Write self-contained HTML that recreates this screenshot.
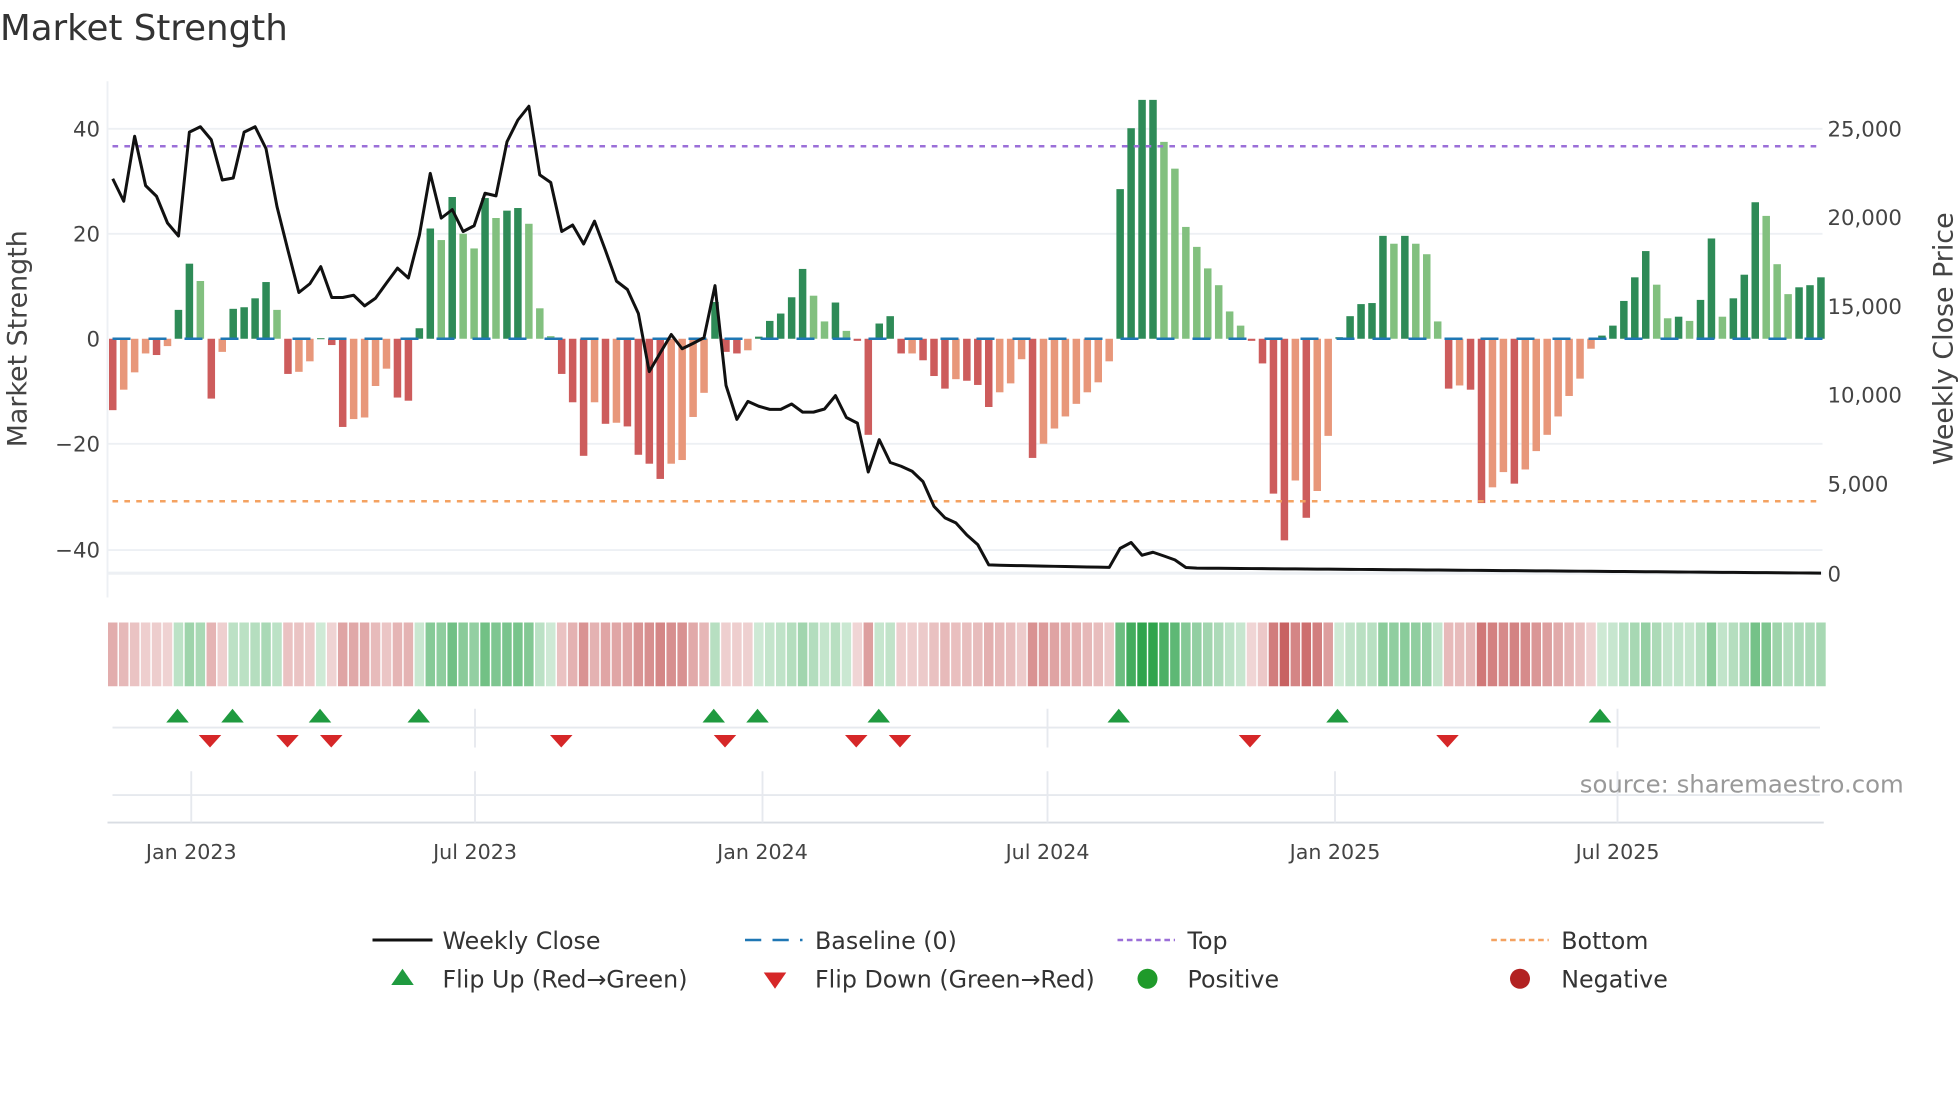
<!DOCTYPE html>
<html><head><meta charset="utf-8">
<style>
html,body{margin:0;padding:0;background:#fff;}
svg{display:block;font-family:"DejaVu Sans","Liberation Sans",sans-serif;}
</style></head>
<body>
<svg id="s" width="1960" height="1102" viewBox="0 0 1568 881.6" xmlns="http://www.w3.org/2000/svg">
<rect width="1568" height="882" fill="#fff"/>
<text x="0" y="32" font-size="28.5" fill="#333">Market Strength</text>
<g stroke="#edf0f4" stroke-width="1.5">
<line x1="86" y1="103" x2="1458" y2="103"/>
<line x1="86" y1="187" x2="1458" y2="187"/>
<line x1="86" y1="355" x2="1458" y2="355"/>
<line x1="86" y1="440" x2="1458" y2="440"/>
<line x1="86" y1="458.5" x2="1458" y2="458.5" stroke-width="2.5"/>
<line x1="86" y1="65" x2="86" y2="478"/>
</g>
<g id="bars"></g>
<line x1="90" y1="271" x2="1458" y2="271" stroke="#1f77b4" stroke-width="2" stroke-dasharray="14.4 14.4"/>
<line x1="90" y1="117" x2="1458" y2="117" stroke="#9b6fd8" stroke-width="2" stroke-dasharray="4.5 5"/>
<line x1="90" y1="401" x2="1458" y2="401" stroke="#f4a261" stroke-width="2" stroke-dasharray="4.5 5"/>
<path id="ln" fill="none" stroke="#111" stroke-width="2.4" stroke-linejoin="round"/>
<g font-size="17" fill="#444" text-anchor="end">
<text x="80" y="109">40</text><text x="80" y="193">20</text><text x="80" y="277">0</text>
<text x="80" y="361">−20</text><text x="80" y="446">−40</text>
</g>
<g font-size="17" fill="#444">
<text x="1462" y="109">25,000</text><text x="1462" y="180">20,000</text><text x="1462" y="251">15,000</text>
<text x="1462" y="322">10,000</text><text x="1462" y="393">5,000</text><text x="1462" y="465">0</text>
</g>
<text transform="translate(21,271) rotate(-90)" font-size="21.5" fill="#444" text-anchor="middle">Market Strength</text>
<text transform="translate(1562,271) rotate(-90)" font-size="21.5" fill="#444" text-anchor="middle">Weekly Close Price</text>
<g id="heat"></g>
<g stroke="#e6e9ee" stroke-width="1.5">
<line x1="90" y1="582" x2="1456" y2="582"/>
<line x1="90" y1="636" x2="1456" y2="636"/>
<line x1="86" y1="658" x2="1459" y2="658" stroke="#d9dde3"/>
<line x1="380" y1="567" x2="380" y2="598"/>
<line x1="153" y1="617" x2="153" y2="658"/>
<line x1="380" y1="617" x2="380" y2="658"/>
<line x1="610" y1="617" x2="610" y2="658"/>
<line x1="838" y1="567" x2="838" y2="598"/>
<line x1="838" y1="617" x2="838" y2="658"/>
<line x1="1068" y1="617" x2="1068" y2="658"/>
<line x1="1294" y1="567" x2="1294" y2="598"/>
<line x1="1294" y1="617" x2="1294" y2="658"/>
</g>
<g id="flips"></g>
<text x="1523" y="634" font-size="19.5" fill="#999" text-anchor="end">source: sharemaestro.com</text>
<g font-size="16.5" fill="#444" text-anchor="middle">
<text x="153" y="687">Jan 2023</text><text x="380" y="687">Jul 2023</text><text x="610" y="687">Jan 2024</text>
<text x="838" y="687">Jul 2024</text><text x="1068" y="687">Jan 2025</text><text x="1294" y="687">Jul 2025</text>
</g>
<g font-size="19" fill="#333">
<line x1="298" y1="752" x2="346" y2="752" stroke="#111" stroke-width="2.4"/>
<text x="354" y="759">Weekly Close</text>
<line x1="596" y1="752" x2="642" y2="752" stroke="#1f77b4" stroke-width="2" stroke-dasharray="13 9"/>
<text x="652" y="759">Baseline (0)</text>
<line x1="894" y1="752" x2="940" y2="752" stroke="#9b6fd8" stroke-width="2" stroke-dasharray="4.5 3"/>
<text x="950" y="759">Top</text>
<line x1="1193" y1="752" x2="1239" y2="752" stroke="#f4a261" stroke-width="2" stroke-dasharray="4.5 3"/>
<text x="1249" y="759">Bottom</text>
<polygon points="313,788 331,788 322,775" fill="#1f9a3f"/>
<text x="354" y="790">Flip Up (Red→Green)</text>
<polygon points="611,778 629,778 620,791" fill="#d62728"/>
<text x="652" y="790">Flip Down (Green→Red)</text>
<circle cx="918" cy="783" r="8" fill="#1f9a2a"/>
<text x="950" y="790">Positive</text>
<circle cx="1216" cy="783" r="8" fill="#b22222"/>
<text x="1249" y="790">Negative</text>
</g>
</svg>
<script>
var V=[-13.6,-9.7,-6.4,-2.8,-3.1,-1.4,5.5,14.3,11,-11.4,-2.5,5.7,6,7.7,10.8,5.5,-6.7,-6.3,-4.3,0.1,-1.2,-16.8,-15.3,-15,-9,-5.7,-11.2,-11.8,2,21,18.8,27,20,17.2,26.8,23,24.4,24.9,21.9,5.8,0.5,
-6.7,-12.1,-22.3,-12.1,-16.2,-16,-16.7,-22.1,-23.8,-26.7,-23.8,-23.1,-14.9,-10.3,7,-2.5,-2.8,-2.2,0.4,3.4,4.8,7.9,13.3,8.2,3.3,6.9,1.5,-0.4,-18.3,2.9,4.3,-2.8,-2.8,-4.1,-7.1,-9.5,-7.7,-8,-8.8,-13,
-10.2,-8.5,-3.9,-22.7,-20,-17.1,-14.8,-12.4,-10.2,-8.3,-4.3,28.5,40.1,45.5,45.5,37.5,32.4,21.3,17.5,13.4,10.2,5.2,2.5,-0.4,-4.7,-29.5,-38.4,-27,-34.1,-29,-18.5,0.3,4.3,6.6,6.8,19.6,18.1,19.6,18.1,16.1,
3.3,-9.5,-8.9,-9.7,-31.3,-28.3,-25.4,-27.6,-24.9,-21.4,-18.3,-14.8,-10.9,-7.6,-1.9,0.6,2.5,7.2,11.7,16.7,10.3,3.9,4.2,3.4,7.4,19.1,4.2,7.7,12.2,26,23.4,14.2,8.5,9.8,10.2,11.7];
var L=[143,161,109,148.5,157,178.4,188.8,105.7,101.4,111.8,144,142.4,105.7,101.4,118.9,165.3,200.4,234,227,213.3,
238,238,236.2,244.7,238.6,226.4,214.5,222.4,188.2,138.7,174.5,167.7,185.2,180.6,154.6,156.7,113.4,96,85,139.9,
146,185.2,180,195.2,176.9,200.4,224.9,231.6,250.8,297.3,282.3,267.6,279,274.7,270.1,228.5,308.3,335.5,321.1,325,
327.5,327.5,323.2,329.7,329.7,327.2,316.5,334,338.5,377.6,351.7,370,373,377,385.3,405.1,414.3,418.3,428,435.7,451.9];
for(var i=81;i<92;i++)L.push(452.2+(i-81)*0.17);
L=L.concat([438.7,434,444.2,441.8,444.8,447.9,454]);
while(L.length<157){L.push(454.5+(L.length-99)*0.07);}
var NS="http://www.w3.org/2000/svg",X0=90.2,DX=8.76,U=4.2,Z=271;
function el(t,a,p){var e=document.createElementNS(NS,t);for(var k in a)e.setAttribute(k,a[k]);p.appendChild(e);return e;}
var gb=document.getElementById('bars'),gh=document.getElementById('heat');
for(var i=0;i<V.length;i++){
 var v=V[i],p=i?V[i-1]:0,x=X0+DX*i,c;
 if(v>=0)c=(v>=p)?'#2e8b57':'#82c07f';else c=(v>=p)?'#e8977a':'#cd5c5c';
 var h=Math.abs(v)*U;
 el('rect',{x:x-3,y:v>=0?Z-h:Z,width:6,height:Math.max(h,0.8),fill:c},gb);
 var t=Math.min(1,Math.abs(v)/46),a=0.22+0.75*t,b=v>=0?[40,160,70]:[190,70,70];
 var col='rgb('+b.map(function(q){return Math.round(255*(1-a)+q*a)}).join(',')+')';
 el('rect',{x:x-3.8,y:498,width:7.6,height:51,fill:col},gh);
}
var d='';for(var i=0;i<L.length;i++)d+=(i?'L':'M')+(X0+DX*i).toFixed(1)+' '+L[i];
document.getElementById('ln').setAttribute('d',d);
var gf=document.getElementById('flips');
[142,186,256,335,571,606,703,895,1070,1280].forEach(function(x){el('polygon',{points:(x-9)+',578 '+(x+9)+',578 '+x+',567',fill:'#1f9a3f'},gf);});
[168,230,265,449,580,685,720,1000,1158].forEach(function(x){el('polygon',{points:(x-9)+',588 '+(x+9)+',588 '+x+',598',fill:'#d62728'},gf);});
</script>
</body></html>
